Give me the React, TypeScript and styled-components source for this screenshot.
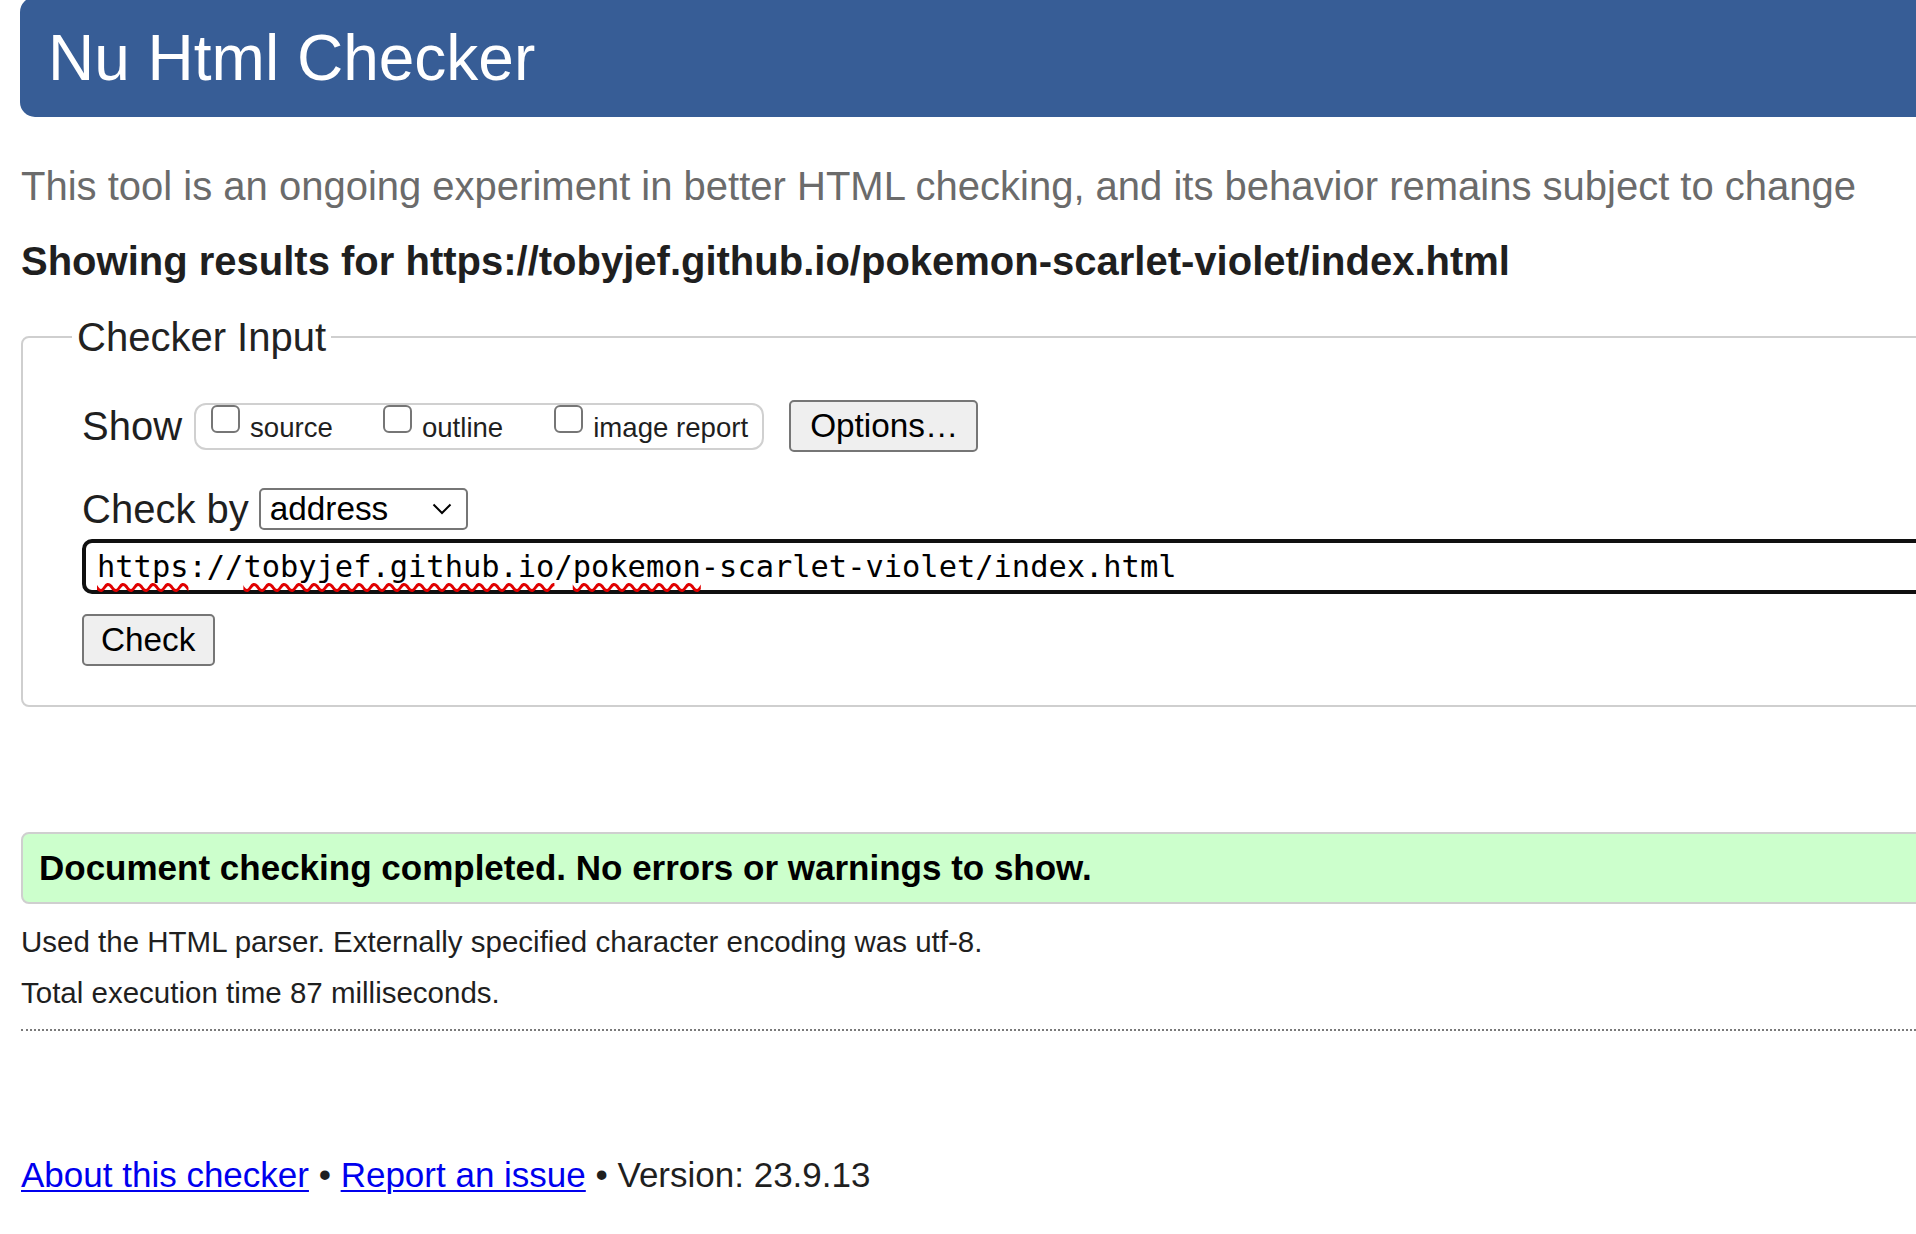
import styled, { createGlobalStyle } from "styled-components";

const GlobalStyle = createGlobalStyle`
  html, body {
    margin: 0;
    padding: 0;
    background: #fff;
    overflow-x: hidden;
  }
  body {
    font-family: "Liberation Sans", Arial, sans-serif;
    color: #1f1f1f;
  }
`;

const Page = styled.div`
  width: calc(100vw + 40px);
  padding-left: 20px;
  box-sizing: border-box;
  padding-bottom: 40px;
`;

const Header = styled.header`
  background: #375d96;
  height: 120px;
  margin-top: -3px;
  border-radius: 15px;
  padding-left: 28px;
  box-sizing: border-box;
`;

const Title = styled.h1`
  margin: 0;
  padding-top: 3px;
  font-size: 64px;
  font-weight: 400;
  line-height: 117px;
  color: #fff;
`;

const Intro = styled.p`
  margin: 46px 0 0 1px;
  font-size: 40px;
  line-height: 46px;
  color: #6b6b6b;
`;

const ResultsFor = styled.h2`
  margin: 29px 0 0 1px;
  font-size: 40px;
  line-height: 46px;
  font-weight: 700;
  color: #1f1f1f;
`;

const InputBox = styled.fieldset`
  margin: 30px 0 0 1px;
  padding: 0 0 39px 59px;
  border: 2px solid #cfcfcf;
  border-radius: 8px;
  min-width: 0;
`;

const Legend = styled.legend`
  margin-left: -10px;
  padding: 0 5px;
  font-size: 40px;
  line-height: 46px;
  color: #222;
`;

const Row = styled.div<{ $top: number }>`
  display: flex;
  align-items: center;
  margin-top: ${(p) => p.$top}px;
`;

const RowLabel = styled.span<{ $gap: number }>`
  font-size: 40px;
  line-height: 46px;
  margin-right: ${(p) => p.$gap}px;
  color: #1f1f1f;
`;

const CheckGroup = styled.div`
  display: flex;
  align-items: flex-start;
  height: 47px;
  box-sizing: border-box;
  border: 2px solid #d0d0d0;
  border-radius: 12px;
  padding: 0 14px 0 15px;
`;

const CheckItem = styled.label<{ $gap: number }>`
  display: flex;
  align-items: flex-start;
  margin-right: ${(p) => p.$gap}px;
  &:last-child {
    margin-right: 0;
  }
`;

const Box = styled.input`
  appearance: none;
  width: 29px;
  height: 28px;
  margin: 0 10px 0 0;
  border: 2px solid #767676;
  border-radius: 6px;
  background: #fff;
  box-sizing: border-box;
`;

const CheckText = styled.span`
  font-size: 27.6px;
  line-height: 32px;
  margin-top: 7px;
  color: #1f1f1f;
`;

const Button = styled.button<{ $w: number }>`
  width: ${(p) => p.$w}px;
  height: 52px;
  box-sizing: border-box;
  background: #efefef;
  border: 2px solid #767676;
  border-radius: 5px;
  font-family: "Liberation Sans", Arial, sans-serif;
  font-size: 33.3px;
  color: #000;
  padding: 0 0 0 17px;
  text-align: left;
`;

const OptionsButton = styled(Button)`
  margin-left: 25px;
  padding-left: 19px;
`;

const SelectBox = styled.div`
  display: flex;
  align-items: center;
  justify-content: space-between;
  width: 209px;
  height: 42px;
  box-sizing: border-box;
  border: 2px solid #767676;
  border-radius: 5px;
  padding: 0 14px 0 9px;
  font-size: 33.3px;
  color: #000;
`;

const UrlField = styled.div`
  margin-top: 7px;
  height: 55px;
  box-sizing: border-box;
  border: 4px solid #101010;
  border-radius: 10px;
  padding-left: 11px;
  display: flex;
  align-items: center;
  font-family: "DejaVu Sans Mono", "Liberation Mono", monospace;
  font-size: 30.4px;
  color: #000;
  white-space: pre;
`;

const Misspelled = styled.span`
  text-decoration: underline wavy #e00000;
  text-decoration-thickness: 2.5px;
  text-decoration-skip-ink: none;
  text-underline-offset: 6px;
`;

const CheckRow = styled.div`
  margin-top: 20px;
`;

const Success = styled.div`
  margin: 125px 0 0 1px;
  height: 72px;
  box-sizing: border-box;
  border: 2px solid #cfcfcf;
  border-radius: 8px;
  background: #ccffcc;
  padding-left: 16px;
  font-size: 35px;
  font-weight: 700;
  line-height: 68px;
  color: #000;
`;

const Note = styled.p<{ $top: number }>`
  margin: ${(p) => p.$top}px 0 0 1px;
  font-size: 29.5px;
  line-height: 34px;
  color: #1f1f1f;
`;

const Rule = styled.hr`
  margin: 19px 0 0 1px;
  border: 0;
  border-top: 2px dotted #7a7a7a;
  height: 0;
`;

const Footer = styled.p`
  margin: 124px 0 0 1px;
  font-size: 35px;
  line-height: 40px;
  color: #1f1f1f;
`;

const Link = styled.a`
  color: #0000ee;
  text-decoration: underline;
  text-decoration-thickness: 2px;
  text-underline-offset: 3px;
`;

const Chevron = () => (
  <svg width="20" height="12" viewBox="0 0 20 12" fill="none">
    <path d="M1.5 1.5 L10 10 L18.5 1.5" stroke="#000" strokeWidth="2" />
  </svg>
);

const App = () => {
  return (
    <Page>
      <GlobalStyle />
      <Header>
        <Title>Nu Html Checker</Title>
      </Header>
      <Intro>
        This tool is an ongoing experiment in better HTML checking, and its behavior remains subject to change
      </Intro>
      <ResultsFor>Showing results for https://tobyjef.github.io/pokemon-scarlet-violet/index.html</ResultsFor>

      <InputBox>
        <Legend>Checker Input</Legend>
        <Row $top={40}>
          <RowLabel $gap={12}>Show</RowLabel>
          <CheckGroup>
            <CheckItem $gap={50}>
              <Box type="checkbox" />
              <CheckText>source</CheckText>
            </CheckItem>
            <CheckItem $gap={51}>
              <Box type="checkbox" />
              <CheckText>outline</CheckText>
            </CheckItem>
            <CheckItem $gap={0}>
              <Box type="checkbox" />
              <CheckText>image report</CheckText>
            </CheckItem>
          </CheckGroup>
          <OptionsButton $w={189}>Options…</OptionsButton>
        </Row>
        <Row $top={34}>
          <RowLabel $gap={10}>Check by</RowLabel>
          <SelectBox>
            <span>address</span>
            <Chevron />
          </SelectBox>
        </Row>
        <UrlField>
          <Misspelled>https</Misspelled>://<Misspelled>tobyjef.github.io</Misspelled>/
          <Misspelled>pokemon</Misspelled>-scarlet-violet/index.html
        </UrlField>
        <CheckRow>
          <Button $w={133}>Check</Button>
        </CheckRow>
      </InputBox>

      <Success>Document checking completed. No errors or warnings to show.</Success>
      <Note $top={21}>Used the HTML parser. Externally specified character encoding was utf-8.</Note>
      <Note $top={17}>Total execution time 87 milliseconds.</Note>
      <Rule />
      <Footer>
        <Link href="#">About this checker</Link> • <Link href="#">Report an issue</Link> • Version: 23.9.13
      </Footer>
    </Page>
  );
};

export default App;
